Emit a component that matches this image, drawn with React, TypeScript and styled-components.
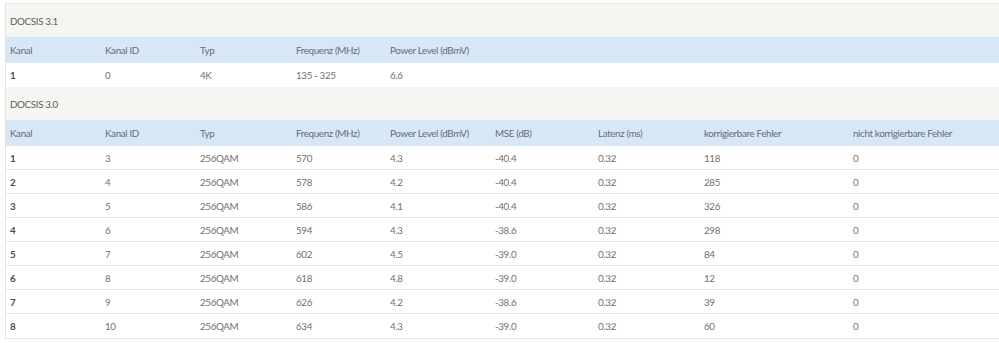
import styled, { createGlobalStyle } from "styled-components";

const GlobalStyle = createGlobalStyle`
  body {
    margin: 0;
    background: #ffffff;
    font-family: Lato, "Open Sans", sans-serif;
  }
`;

const COLUMNS = "95px 95px 96px 94px 105px 103px 106px 149px 1fr";

const Page = styled.div`
  padding: 3px 0 0 5px;
`;
const Panel = styled.div`
  border-left: 1px solid #e4e4e4;
  border-top: 1px solid #ececec;
  border-bottom: 1px solid #e4e4e4;
`;
const SectionTitle = styled.div`
  height: 33px;
  display: flex;
  align-items: center;
  padding-left: 4px;
  background-color: #f5f5f2;
  color: #5e5e5e;
  font-size: 9.8px;
  letter-spacing: -0.35px;
`;
const Row = styled.div<{ header?: boolean }>`
  display: grid;
  grid-template-columns: ${COLUMNS};
  height: ${(props) => (props.header ? "26px" : "24px")};
  align-items: center;
  background-color: ${(props) => (props.header ? "#d8e7f5" : "#ffffff")};
  border-bottom: ${(props) => (props.header ? "none" : "1px solid #e8e8e8")};
  box-sizing: border-box;
  &:last-child {
    border-bottom: none;
  }
`;
const Cell = styled.span<{ header?: boolean; bold?: boolean }>`
  padding-left: 4px;
  font-size: 9.8px;
  letter-spacing: -0.35px;
  white-space: nowrap;
  color: ${(props) => (props.header ? "#666c74" : props.bold ? "#4a4a4a" : "#707070")};
  font-weight: ${(props) => (props.bold ? 700 : 400)};
`;

const headers31 = ["Kanal", "Kanal ID", "Typ", "Frequenz (MHz)", "Power Level (dBmV)"];
const headers30 = [
  ...headers31,
  "MSE (dB)",
  "Latenz (ms)",
  "korrigierbare Fehler",
  "nicht korrigierbare Fehler",
];

const rows31 = [["1", "0", "4K", "135 - 325", "6.6"]];
const rows30 = [
  ["1", "3", "256QAM", "570", "4.3", "-40.4", "0.32", "118", "0"],
  ["2", "4", "256QAM", "578", "4.2", "-40.4", "0.32", "285", "0"],
  ["3", "5", "256QAM", "586", "4.1", "-40.4", "0.32", "326", "0"],
  ["4", "6", "256QAM", "594", "4.3", "-38.6", "0.32", "298", "0"],
  ["5", "7", "256QAM", "602", "4.5", "-39.0", "0.32", "84", "0"],
  ["6", "8", "256QAM", "618", "4.8", "-39.0", "0.32", "12", "0"],
  ["7", "9", "256QAM", "626", "4.2", "-38.6", "0.32", "39", "0"],
  ["8", "10", "256QAM", "634", "4.3", "-39.0", "0.32", "60", "0"],
];

function Section({ title, headers, rows }: { title: string; headers: string[]; rows: string[][] }) {
  return (
    <>
      <SectionTitle>{title}</SectionTitle>
      <div>
        <Row header>
          {headers.map((h) => (
            <Cell header key={h}>
              {h}
            </Cell>
          ))}
        </Row>
        {rows.map((r) => (
          <Row key={r[0]}>
            {r.map((v, i) => (
              <Cell bold={i === 0} key={i}>
                {v}
              </Cell>
            ))}
          </Row>
        ))}
      </div>
    </>
  );
}

export default function App() {
  return (
    <Page>
      <GlobalStyle />
      <Panel>
        <Section title="DOCSIS 3.1" headers={headers31} rows={rows31} />
        <Section title="DOCSIS 3.0" headers={headers30} rows={rows30} />
      </Panel>
    </Page>
  );
}
